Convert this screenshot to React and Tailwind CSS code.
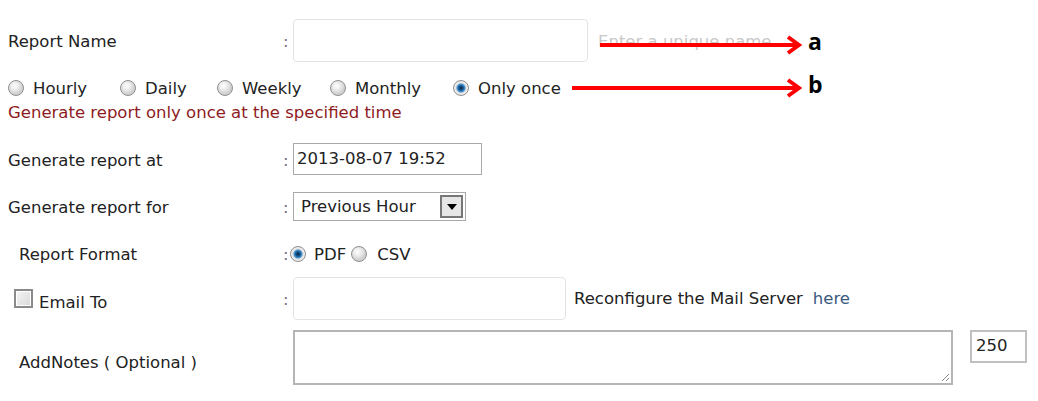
import React from "react";

function Radio({ checked }) {
  return (
    <span
      className={
        "inline-block w-[16px] h-[16px] rounded-full border border-[#8f8f8f] shrink-0 " +
        (checked
          ? "bg-[radial-gradient(circle_at_50%_50%,#06213d_0px,#1a5f9c_2.5px,#4c9ad6_4px,#dcdcdc_5px,#f2f2f2_6.5px,#bdbdbd_8px)]"
          : "bg-[radial-gradient(circle_at_40%_35%,#ffffff_0px,#f0f0f0_3px,#d0d0d0_8px)]")
      }
    />
  );
}

function Label({ children, className = "" }) {
  return <div className={"w-[275px] shrink-0 " + className}>{children}</div>;
}

function Colon() {
  return <span className="w-[10px] shrink-0 pt-[4px] text-[#7a6a80]">:</span>;
}

function Arrow({ x1, x2, y, letter }) {
  return (
    <div className="absolute" style={{ left: x1, top: y - 12, width: x2 - x1 + 30, height: 24 }}>
      <svg width={x2 - x1 + 2} height="24" className="absolute left-0 top-0">
        <line x1="0" y1="12" x2={x2 - x1 - 2} y2="12" stroke="#ff0000" strokeWidth="4" />
        <polyline
          points={`${x2 - x1 - 12},4 ${x2 - x1 - 1},12 ${x2 - x1 - 12},20`}
          fill="none"
          stroke="#ff0000"
          strokeWidth="4"
          strokeLinejoin="miter"
        />
      </svg>
      <span
        className="absolute top-[-3px] text-[23px] font-bold text-black leading-none font-['Open_Sans',sans-serif]"
        style={{ left: x2 - x1 + 8 }}
      >
        {letter}
      </span>
    </div>
  );
}

export default function App() {
  return (
    <div className="relative w-[1038px] h-[401px] bg-white text-[#222] text-[16.5px] font-['DejaVu_Sans',sans-serif] overflow-hidden">
      <div className="flex flex-col pl-[8px] pt-[19px]">
        {/* Report name */}
        <div className="flex items-center h-[43px]">
          <Label className="pt-[4px]">Report Name</Label>
          <Colon />
          <div className="w-[295px] h-[43px] border border-[#e3e3e3] rounded-[4px] bg-white" />
          <span className="ml-[10px] pt-[4px] text-[#c8c8c8]">Enter a unique name</span>
        </div>

        {/* Frequency radios */}
        <div className="flex items-center h-[24px] mt-[14px]">
          {[
            ["Hourly", false, "w-[112px]"],
            ["Daily", false, "w-[97px]"],
            ["Weekly", false, "w-[113px]"],
            ["Monthly", false, "w-[123px]"],
            ["Only once", true, ""],
          ].map(([t, c, w]) => (
            <label key={t} className={"flex items-center gap-[9px] " + w}>
              <Radio checked={c} />
              <span className="pt-[3px]">{t}</span>
            </label>
          ))}
        </div>
        <div className="h-[24px] leading-[24px] pt-[1px] text-[#8e1b22]">
          Generate report only once at the specified time
        </div>

        {/* Generate at */}
        <div className="flex items-center h-[32px] mt-[19px]">
          <Label className="pt-[4px]">Generate report at</Label>
          <Colon />
          <div className="w-[189px] h-[32px] border border-[#aaa] bg-white flex items-center pl-[3px]">
            2013-08-07 19:52
          </div>
        </div>

        {/* Generate for */}
        <div className="flex items-center h-[29px] mt-[17px]">
          <Label className="pt-[4px]">Generate report for</Label>
          <Colon />
          <div className="w-[173px] h-[29px] border border-[#aaa] bg-white flex items-center justify-between pl-[7px] pr-[2px]">
            <span className="pt-[2px]">Previous Hour</span>
            <span className="w-[23px] h-[23px] border-2 border-[#777] bg-[#e6e6e6] flex items-center justify-center">
              <svg width="10" height="6" viewBox="0 0 10 6">
                <polygon points="0,0 10,0 5,6" fill="#000" />
              </svg>
            </span>
          </div>
        </div>

        {/* Report format */}
        <div className="flex items-center h-[22px] mt-[22px]">
          <Label className="pl-[11px] pt-[3px]">Report Format</Label>
          <span className="w-[7px] shrink-0 pt-[3px] text-[#7a6a80]">:</span>
          <Radio checked />
          <span className="ml-[8px] pt-[2px]">PDF</span>
          <span className="ml-[5px] flex"><Radio /></span>
          <span className="ml-[10px] pt-[2px]">CSV</span>
        </div>

        {/* Email */}
        <div className="flex items-center h-[43px] mt-[12px]">
          <Label className="flex items-center pl-[6px]">
            <span className="w-[19px] h-[19px] border-2 border-[#8a8a8a] bg-[linear-gradient(135deg,#f6f6f6,#d8d8d8)] shadow-[inset_0_0_0_1px_#fff] shrink-0" />
            <span className="ml-[6px] mt-[9px]">Email To</span>
          </Label>
          <Colon />
          <div className="w-[273px] h-[43px] border border-[#e3e3e3] rounded-[4px] bg-white" />
          <span className="ml-[8px] pt-[2px]">Reconfigure the Mail Server</span>
          <span className="ml-[10px] pt-[2px] text-[#3a5a80]">here</span>
        </div>

        {/* Notes */}
        <div className="flex items-start mt-[10px]">
          <Label className="pl-[11px] pt-[21px]">AddNotes ( Optional )</Label>
          <span className="w-[10px] shrink-0" />
          <div className="relative w-[660px] h-[55px] border-2 border-[#b5b5b8] bg-white">
            <svg className="absolute right-[1px] bottom-[1px]" width="10" height="10" viewBox="0 0 10 10">
              <line x1="9" y1="2" x2="2" y2="9" stroke="#888" strokeWidth="1" />
              <line x1="9" y1="6" x2="6" y2="9" stroke="#888" strokeWidth="1" />
            </svg>
          </div>
          <div className="ml-[17px] w-[57px] h-[33px] border-2 border-[#c0c0c0] bg-white flex items-center pl-[4px]">
            250
          </div>
        </div>
      </div>

      <Arrow x1={600} x2={800} y={45} letter="a" />
      <Arrow x1={572} x2={800} y={88} letter="b" />
    </div>
  );
}
